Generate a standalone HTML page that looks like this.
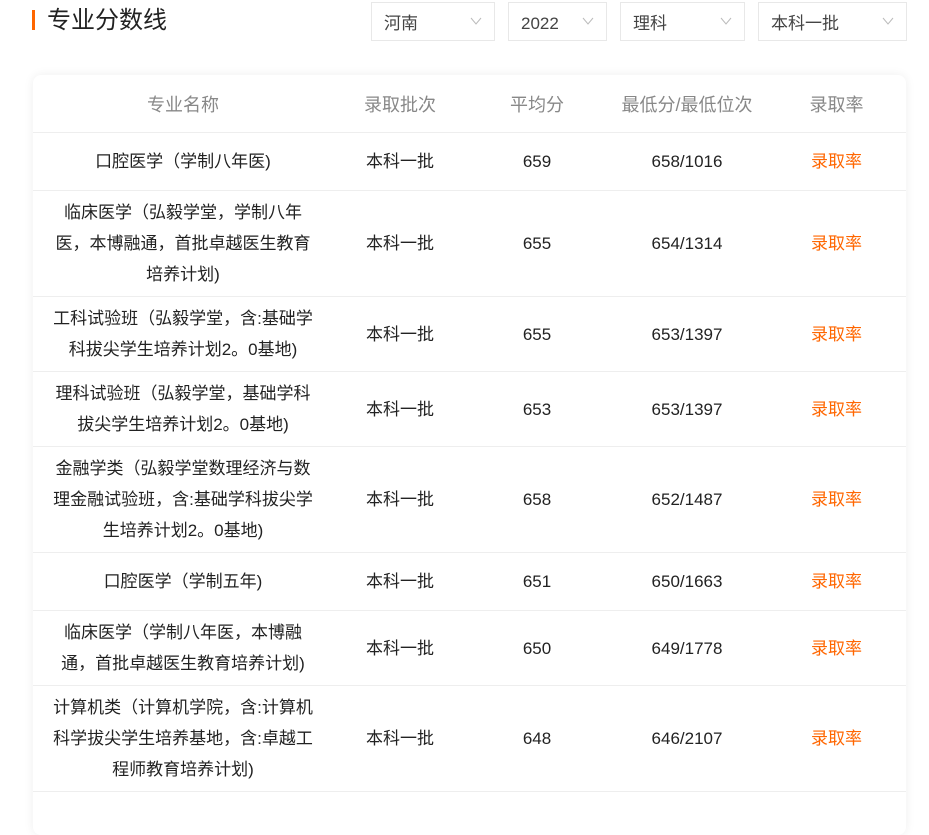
<!DOCTYPE html><html><head><meta charset="utf-8"><style>
body{margin:0;width:929px;height:812px;overflow:hidden;background:#fff;font-family:"Liberation Sans","Noto Sans CJK SC",sans-serif;color:#222}
.bar{position:absolute;left:32px;top:10px;width:3px;height:20px;background:#f60}
.title{position:absolute;left:47px;top:5px;font-size:24px;line-height:32px;color:#222}
.dd{position:absolute;top:2px;height:39px;border:1px solid #e8e8e8;box-sizing:border-box;font-size:17px;color:#444;line-height:42px;padding-left:12px}
.dd svg{position:absolute;right:12px;top:14px}
.card{position:absolute;left:33px;top:75px;width:873px;height:760px;background:#fff;border-radius:8px;box-shadow:0 0 10px rgba(0,0,0,.07);overflow:hidden}
table{border-collapse:collapse;width:873px;table-layout:fixed;font-size:17px}
td,th{text-align:center;padding:0;border-bottom:1px solid #eee}
th{font-weight:normal;color:#888;height:57px;font-size:18px}
td{line-height:31px}
td.n{padding:0 16px}
.r{color:#f60}
</style></head><body>
<div class="bar"></div><div class="title">专业分数线</div>
<div class="dd" style="left:371px;width:124px">河南<svg width="12" height="8"><path d="M1 1L6 7L11 1" stroke="#bbb" fill="none"/></svg></div>
<div class="dd" style="left:508px;width:99px">2022<svg width="12" height="8"><path d="M1 1L6 7L11 1" stroke="#bbb" fill="none"/></svg></div>
<div class="dd" style="left:620px;width:125px">理科<svg width="12" height="8"><path d="M1 1L6 7L11 1" stroke="#bbb" fill="none"/></svg></div>
<div class="dd" style="left:758px;width:149px">本科一批<svg width="12" height="8"><path d="M1 1L6 7L11 1" stroke="#bbb" fill="none"/></svg></div>
<div class="card"><table>
<colgroup><col style="width:300px"><col style="width:134px"><col style="width:140px"><col style="width:160px"><col style="width:139px"></colgroup>
<tr><th>专业名称</th><th>录取批次</th><th>平均分</th><th>最低分/最低位次</th><th>录取率</th></tr>
<tr style="height:58px"><td class="n">口腔医学（学制八年医)</td><td>本科一批</td><td>659</td><td>658/1016</td><td class="r">录取率</td></tr>
<tr style="height:106px"><td class="n">临床医学（弘毅学堂，学制八年医，本博融通，首批卓越医生教育培养计划)</td><td>本科一批</td><td>655</td><td>654/1314</td><td class="r">录取率</td></tr>
<tr style="height:75px"><td class="n">工科试验班（弘毅学堂，含:基础学科拔尖学生培养计划2。0基地)</td><td>本科一批</td><td>655</td><td>653/1397</td><td class="r">录取率</td></tr>
<tr style="height:75px"><td class="n">理科试验班（弘毅学堂，基础学科拔尖学生培养计划2。0基地)</td><td>本科一批</td><td>653</td><td>653/1397</td><td class="r">录取率</td></tr>
<tr style="height:106px"><td class="n">金融学类（弘毅学堂数理经济与数理金融试验班，含:基础学科拔尖学生培养计划2。0基地)</td><td>本科一批</td><td>658</td><td>652/1487</td><td class="r">录取率</td></tr>
<tr style="height:58px"><td class="n">口腔医学（学制五年)</td><td>本科一批</td><td>651</td><td>650/1663</td><td class="r">录取率</td></tr>
<tr style="height:75px"><td class="n">临床医学（学制八年医，本博融通，首批卓越医生教育培养计划)</td><td>本科一批</td><td>650</td><td>649/1778</td><td class="r">录取率</td></tr>
<tr style="height:106px"><td class="n">计算机类（计算机学院，含:计算机科学拔尖学生培养基地，含:卓越工程师教育培养计划)</td><td>本科一批</td><td>648</td><td>646/2107</td><td class="r">录取率</td></tr>
<tr style="height:58px"><td class="n"></td><td></td><td></td><td></td><td></td></tr>
</table></div>
</body></html>
